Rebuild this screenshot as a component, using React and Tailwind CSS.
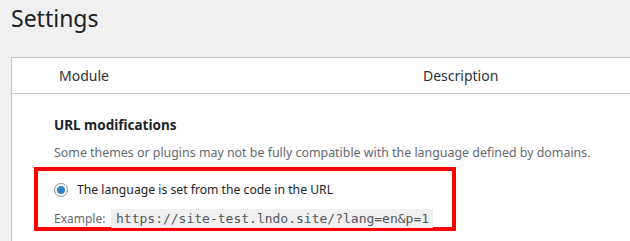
export default function App() {
    const sans = { fontFamily: '"Noto Sans", "Open Sans", sans-serif' };
    return (
        <div className="w-[630px] h-[241px] overflow-hidden bg-[#f0f0f1] text-[#1d2327]" style={sans}>
            <h1 className="pl-[11px] pt-[4px] text-[23px] leading-[29px] font-normal text-[#1d2327]">
                Settings
            </h1>
            <div className="ml-[11px] mt-[24px] bg-white border-l border-t border-[#c3c4c7]">
                <div className="flex items-center h-[36px] border-b border-[#c3c4c7] text-[14px] text-[#2c3338]">
                    <div className="w-[411px] pl-[47px]">Module</div>
                    <div>Description</div>
                </div>
                <div className="pl-[22px] pt-[21px] pb-[10px]">
                    <div className="pl-[20px] text-[13.5px] font-bold leading-[20px]">URL modifications</div>
                    <div className="pl-[20px] mt-[8px] text-[12.4px] leading-[19px] text-[#646970]">
                        Some themes or plugins may not be fully compatible with the language defined by domains.
                    </div>
                    <div className="mt-[5px] w-[422px] h-[64px] border-4 border-[#ff0000] pl-[16px] pt-[9px]">
                        <label className="flex items-center gap-[9px] h-[20px] text-[12.2px]">
                            <span className="w-[14px] h-[14px] rounded-full border border-[#8c8f94] bg-white flex items-center justify-center">
                                <span className="w-[8px] h-[8px] rounded-full bg-[#3582c4]" />
                            </span>
                            The language is set from the code in the URL
                        </label>
                        <div className="flex items-center mt-[9px] text-[12px] text-[#646970]">
                            <span className="w-[57px]">Example:</span>
                            <code
                                className="pl-[5px] pr-[4px] h-[19px] leading-[19px] bg-[#f0f0f1] text-[#50575e] text-[13px]"
                                style={{ fontFamily: '"DejaVu Sans Mono", "Liberation Mono", monospace' }}
                            >
                                https://site-test.lndo.site/?lang=en&amp;p=1
                            </code>
                        </div>
                    </div>
                </div>
            </div>
        </div>
    );
}
